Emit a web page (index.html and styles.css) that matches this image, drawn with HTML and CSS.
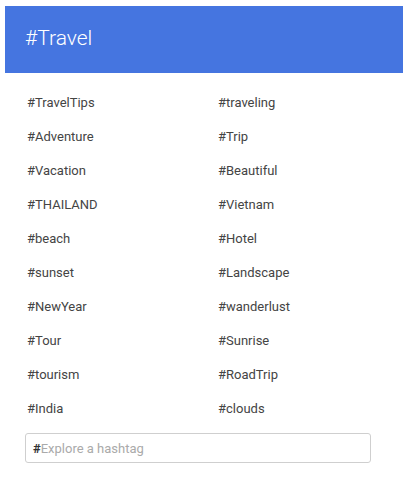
FILE: index.html
```html
<!DOCTYPE html>
<html>
<head>
<meta charset="utf-8">
<link rel="stylesheet" href="styles.css">
</head>
<body>
<div class="card">
  <header class="header"><h1 class="title">#Travel</h1></header>
  <ul class="tags">
    <li>#TravelTips</li><li>#traveling</li>
    <li>#Adventure</li><li>#Trip</li>
    <li>#Vacation</li><li>#Beautiful</li>
    <li>#THAILAND</li><li>#Vietnam</li>
    <li>#beach</li><li>#Hotel</li>
    <li>#sunset</li><li>#Landscape</li>
    <li>#NewYear</li><li>#wanderlust</li>
    <li>#Tour</li><li>#Sunrise</li>
    <li>#tourism</li><li>#RoadTrip</li>
    <li>#India</li><li>#clouds</li>
  </ul>
  <label class="search">
    <span class="hash">#</span>
    <input class="search-input" type="text" placeholder="Explore a hashtag">
  </label>
</div>
</body>
</html>
```
FILE: styles.css
```css
html, body {
  margin: 0;
  padding: 0;
  background: #fff;
}
body {
  font-family: Roboto, "Liberation Sans", sans-serif;
}
.card {
  width: 398px;
  margin: 6px 0 0 5px;
}
.header {
  height: 67px;
  background: #4575e0;
  display: flex;
  align-items: center;
  padding-left: 20px;
  box-sizing: border-box;
}
.title {
  margin: 0 0 4px 0;
  font-size: 21px;
  font-weight: 300;
  color: #fff;
}
.tags {
  list-style: none;
  margin: 13px 0 0 0;
  padding: 0 0 0 22px;
  display: grid;
  grid-template-columns: 191px 1fr;
}
.tags li {
  height: 34px;
  line-height: 34px;
  font-size: 13px;
  color: #444;
}
.search {
  display: flex;
  align-items: center;
  margin: 7px 0 0 20px;
  width: 346px;
  height: 30px;
  box-sizing: border-box;
  border: 1px solid #cfcfcf;
  border-radius: 3px;
  padding-left: 7px;
}
.hash {
  font-size: 13px;
  font-weight: 700;
  color: #333;
}
.search-input {
  flex: 1;
  border: none;
  outline: none;
  padding: 0;
  margin: 0;
  font-family: Roboto, "Liberation Sans", sans-serif;
  font-size: 13px;
  color: #333;
  background: transparent;
}
.search-input::placeholder {
  color: #aaa;
}
```
